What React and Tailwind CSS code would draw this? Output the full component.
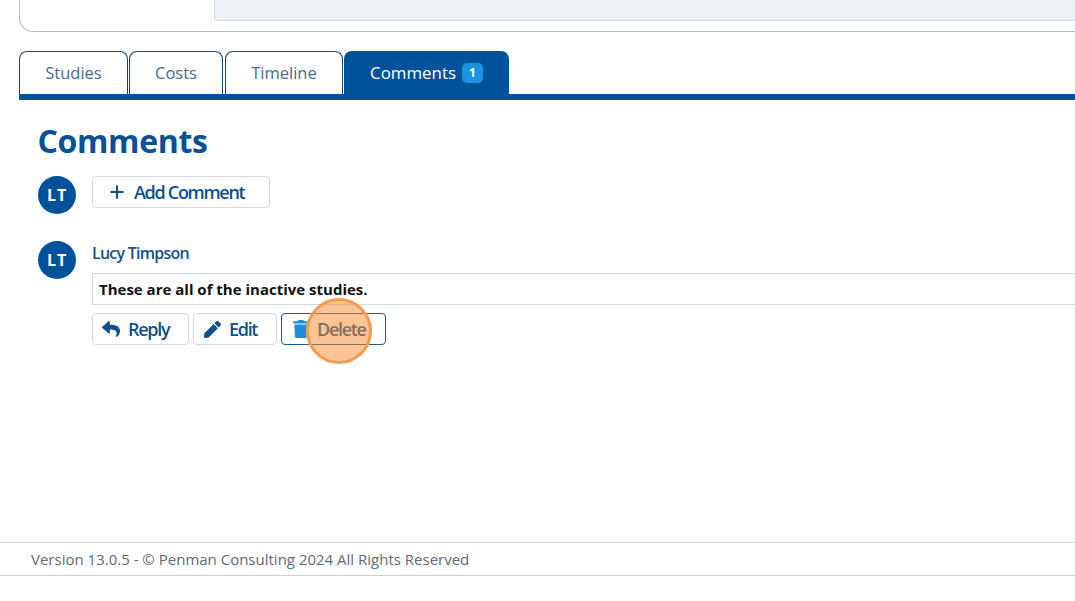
import React from "react";
import { FaReply, FaPen, FaTrash } from "react-icons/fa";
import { Plus } from "lucide-react";

function Tab({ children, className }) {
  return (
    <div className={`h-[43px] flex items-center justify-center rounded-t-[8px] border border-b-0 border-[#19466f] bg-white text-[#476a8c] text-[16.5px] ${className}`}>
      {children}
    </div>
  );
}

function Avatar() {
  return (
    <div className="w-[38px] h-[38px] rounded-full bg-[#00529b] text-white font-bold text-[16px] flex items-center justify-center shrink-0 tracking-[0.8px]">
      LT
    </div>
  );
}

function ActionButton({ icon, label, className }) {
  return (
    <div className={`h-[32px] flex items-center rounded-[4px] border bg-white text-[#0f4f8c] font-[650] text-[18px] tracking-[-1.3px] ${className}`}>
      {icon}
      <span>{label}</span>
    </div>
  );
}

export default function App() {
  return (
    <div className="w-[1075px] h-[601px] overflow-hidden bg-white flex flex-col" style={{ fontFamily: '"Open Sans", sans-serif' }}>
      <div className="pl-[19px]">
        <div className="h-[32px] border border-t-0 border-r-0 border-[#b4bcc6] rounded-bl-[14px] pl-[194px]">
          <div className="h-[21px] bg-[#eef1f5] border-b border-l border-[#d5dbe5] rounded-bl-[3px]" />
        </div>
      </div>

      <div className="pl-[19px] pt-[19px]">
        <div className="flex items-end">
          <Tab className="w-[109px]">Studies</Tab>
          <Tab className="w-[94px] ml-[1px]">Costs</Tab>
          <Tab className="w-[118px] ml-[2px]">Timeline</Tab>
          <div className="w-[165px] ml-[1px] h-[43px] flex items-center justify-center gap-[6px] rounded-t-[8px] bg-[#00529b] text-white text-[16.9px]">
            <span>Comments</span>
            <span className="w-[21px] h-[20px] rounded-[5px] bg-[#1b93e0] text-white text-[12px] font-bold flex items-center justify-center">1</span>
          </div>
        </div>
        <div className="h-[6px] bg-[#00529b]" />
      </div>

      <div className="pl-[38px] flex-1 flex flex-col">
        <h1 className="mt-[19px] h-[44px] leading-[44px] text-[32px] font-bold text-[#0a5096] -ml-[0.5px] tracking-[-0.35px]">Comments</h1>

        <div className="mt-[13px] flex gap-[16px]">
          <Avatar />
          <div className="w-[178px] h-[32px] flex items-center rounded-[4px] border border-[#d3d9e0] bg-white text-[#0f4f8c] font-[650] text-[18px] tracking-[-1.3px] pl-[14px]">
            <Plus size={20} strokeWidth={2.5} className="mr-[7px]" />
            <span>Add Comment</span>
          </div>
        </div>

        <div className="mt-[27px] flex gap-[16px] relative">
          <Avatar />
          <div className="flex-1 min-w-0">
            <div className="h-[23px] pt-[1px] leading-[22px] text-[16px] font-[650] text-[#134f89] tracking-[-0.75px]">Lucy Timpson</div>
            <div className="mt-[9px] h-[32px] border border-r-0 border-[#d3d9e0] pl-[6px] flex items-center text-[15px] font-bold text-[#111]">
              These are all of the inactive studies.
            </div>
            <div className="mt-[8px] flex gap-[4px]">
              <ActionButton className="w-[97px] pl-[9px] border-[#d3d9e0]" icon={<FaReply size={18} className="mr-[8px]" />} label="Reply" />
              <ActionButton className="w-[84px] pl-[10px] border-[#d3d9e0]" icon={<FaPen size={17} className="mr-[8px]" />} label="Edit" />
              <ActionButton className="w-[105px] pl-[10px] border-[#1f5a87]" icon={<FaTrash size={18} className="mr-[7px] text-[#1b8fd8]" />} label="Delete" />
            </div>
          </div>
          <div className="absolute left-[268px] top-[57px] w-[66px] h-[66px] rounded-full border-[3px] border-[#f79a4b] bg-[#f58a2e]/50" />
        </div>

        <div className="flex-1" />
      </div>

      <div className="mb-[25px] h-[34px] border-y border-[#d0d0d0] pl-[31px] flex items-center text-[15px] text-[#5d6b75]">
        Version 13.0.5 - © Penman Consulting 2024 All Rights Reserved
      </div>
    </div>
  );
}
